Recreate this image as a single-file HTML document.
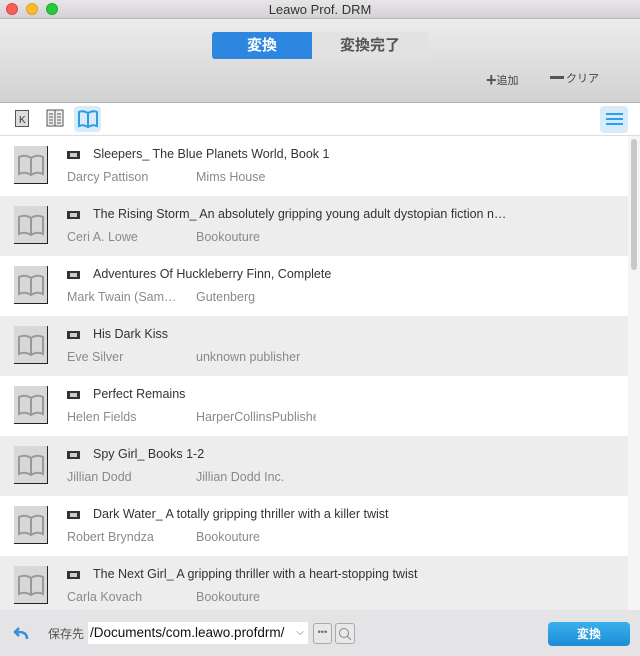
<!DOCTYPE html>
<html><head><meta charset="utf-8"><style>
*{margin:0;padding:0;box-sizing:border-box}
body{width:640px;height:656px;overflow:hidden;font-family:"Liberation Sans","Noto Sans CJK JP",sans-serif;background:#fff;position:relative}
.title{position:absolute;top:0;left:0;width:640px;height:19px;background:linear-gradient(#e8e6e8,#d4d2d4);border-bottom:1px solid #b8b8b8;text-align:center;font-size:13px;line-height:19px;color:#333}
.dot{position:absolute;top:3px;width:12px;height:12px;border-radius:50%}
.tb{position:absolute;top:19px;left:0;width:640px;height:84px;background:linear-gradient(#ececec,#d2d2d2);border-bottom:1px solid #b4b4b4}
.seg{position:absolute;top:13px;left:212px;width:216px;height:27px;background:#e2e2e2;border-radius:3px;font-weight:bold;font-size:15px}
.seg .a{position:absolute;left:0;top:0;width:100px;height:27px;background:#2d87e0;color:#fff;text-align:center;line-height:27px;border-radius:3px 0 0 3px}
.seg .b{position:absolute;left:100px;top:0;width:116px;height:27px;color:#555;text-align:center;line-height:27px}
.act{position:absolute;top:51px;font-size:11px;color:#444}
.ib{position:absolute;top:103px;left:0;width:640px;height:33px;background:#fff;border-bottom:1px solid #ddd}
.row{position:absolute;left:0;width:628px;height:60px}
.row.g{background:#ecedec}
.th{position:absolute;left:14px;top:10px;width:34px;height:38px;background:#d8d8d8;border-right:1px solid #222;border-bottom:1px solid #222}
.th svg{position:absolute;left:3px;top:8px}
.sb{position:absolute;left:67px;top:15px;width:13px;height:8px;background:#333}
.sb:after{content:"";position:absolute;left:3px;top:2px;width:7px;height:4px;background:#ccc}
.t{position:absolute;left:93px;top:11px;font-size:12.5px;color:#333;white-space:nowrap}
.au{position:absolute;left:67px;top:34px;font-size:12.5px;color:#8a8a8a;white-space:nowrap}
.pu{position:absolute;left:196px;top:34px;font-size:12.5px;color:#8a8a8a;white-space:nowrap}
.bot{position:absolute;top:610px;left:0;width:640px;height:46px;background:#e4e4e6}
</style></head><body>
<div class="title">Leawo Prof. DRM
<div class="dot" style="left:6px;background:#fc5f57;border:1px solid #df4744"></div>
<div class="dot" style="left:26px;background:#fdbc2e;border:1px solid #dea123"></div>
<div class="dot" style="left:46px;background:#28c840;border:1px solid #1dad2b"></div>
</div>
<div class="tb">
<div class="seg"><div class="a">変換</div><div class="b">変換完了</div></div>
<div class="act" style="left:486px"><span style="font-size:18px;font-weight:bold;color:#555;vertical-align:-2px">+</span>追加</div>
<div class="act" style="left:550px"><span style="display:inline-block;width:14px;height:3px;background:#555;vertical-align:3px;margin-right:2px"></span>クリア</div>
</div>
<div class="ib">
<svg style="position:absolute;left:15px;top:7px" width="14" height="17"><rect x="0.5" y="0.5" width="13" height="16" fill="#ddd" stroke="#555"/><text x="4" y="13" font-size="10" font-family="Liberation Sans" fill="#333">K</text></svg>
<svg style="position:absolute;left:46px;top:6px" width="18" height="18"><rect x="1" y="1" width="16" height="16" fill="#eee" stroke="#555"/><line x1="9" y1="1" x2="9" y2="17" stroke="#555"/><path d="M3 5h4M3 8h4M3 11h4M3 14h4M11 5h4M11 8h4M11 11h4M11 14h4" stroke="#555"/></svg>
<div style="position:absolute;left:74px;top:3px;width:27px;height:26px;background:#d8ebfa;border-radius:4px"></div>
<svg style="position:absolute;left:78px;top:7px" width="20" height="18"><path d="M10 3Q5 0 1 2V16Q5 14 10 17Q15 14 19 16V2Q15 0 10 3V17" fill="none" stroke="#2d9be8" stroke-width="2"/></svg>
<div style="position:absolute;left:600px;top:3px;width:28px;height:27px;background:#d8ebfa;border-radius:4px"></div>
<div style="position:absolute;left:606px;top:10px;width:17px;height:2px;background:#2aa0ee;box-shadow:0 5px 0 #2aa0ee,0 10px 0 #2aa0ee"></div>
</div>
<div style="position:absolute;left:628px;top:136px;width:12px;height:474px;background:#f5f5f5"></div>
<div style="position:absolute;left:631px;top:139px;width:6px;height:131px;background:#c8c8c8;border-radius:3px"></div>

<div class="row" style="top:136px"><div class="th"><svg width="28" height="22"><path d="M14 4Q8 0 2 3V20Q8 17 14 21Q20 17 26 20V3Q20 0 14 4V21" fill="none" stroke="#999" stroke-width="2"/></svg></div><div class="sb"></div><div class="t">Sleepers_ The Blue Planets World, Book 1</div><div class="au">Darcy Pattison</div><div class="pu">Mims House</div></div>
<div class="row g" style="top:196px"><div class="th"><svg width="28" height="22"><path d="M14 4Q8 0 2 3V20Q8 17 14 21Q20 17 26 20V3Q20 0 14 4V21" fill="none" stroke="#999" stroke-width="2"/></svg></div><div class="sb"></div><div class="t">The Rising Storm_ An absolutely gripping young adult dystopian fiction n…</div><div class="au">Ceri A. Lowe</div><div class="pu">Bookouture</div></div>
<div class="row" style="top:256px"><div class="th"><svg width="28" height="22"><path d="M14 4Q8 0 2 3V20Q8 17 14 21Q20 17 26 20V3Q20 0 14 4V21" fill="none" stroke="#999" stroke-width="2"/></svg></div><div class="sb"></div><div class="t">Adventures Of Huckleberry Finn, Complete</div><div class="au">Mark Twain (Sam…</div><div class="pu">Gutenberg</div></div>
<div class="row g" style="top:316px"><div class="th"><svg width="28" height="22"><path d="M14 4Q8 0 2 3V20Q8 17 14 21Q20 17 26 20V3Q20 0 14 4V21" fill="none" stroke="#999" stroke-width="2"/></svg></div><div class="sb"></div><div class="t">His Dark Kiss</div><div class="au">Eve Silver</div><div class="pu">unknown publisher</div></div>
<div class="row" style="top:376px"><div class="th"><svg width="28" height="22"><path d="M14 4Q8 0 2 3V20Q8 17 14 21Q20 17 26 20V3Q20 0 14 4V21" fill="none" stroke="#999" stroke-width="2"/></svg></div><div class="sb"></div><div class="t">Perfect Remains</div><div class="au">Helen Fields</div><div class="pu" style="width:120px;overflow:hidden">HarperCollinsPublishe</div></div>
<div class="row g" style="top:436px"><div class="th"><svg width="28" height="22"><path d="M14 4Q8 0 2 3V20Q8 17 14 21Q20 17 26 20V3Q20 0 14 4V21" fill="none" stroke="#999" stroke-width="2"/></svg></div><div class="sb"></div><div class="t">Spy Girl_ Books 1-2</div><div class="au">Jillian Dodd</div><div class="pu">Jillian Dodd Inc.</div></div>
<div class="row" style="top:496px"><div class="th"><svg width="28" height="22"><path d="M14 4Q8 0 2 3V20Q8 17 14 21Q20 17 26 20V3Q20 0 14 4V21" fill="none" stroke="#999" stroke-width="2"/></svg></div><div class="sb"></div><div class="t">Dark Water_ A totally gripping thriller with a killer twist</div><div class="au">Robert Bryndza</div><div class="pu">Bookouture</div></div>
<div class="row g" style="top:556px;height:54px;overflow:hidden"><div class="th"><svg width="28" height="22"><path d="M14 4Q8 0 2 3V20Q8 17 14 21Q20 17 26 20V3Q20 0 14 4V21" fill="none" stroke="#999" stroke-width="2"/></svg></div><div class="sb"></div><div class="t">The Next Girl_ A gripping thriller with a heart-stopping twist</div><div class="au">Carla Kovach</div><div class="pu">Bookouture</div></div>

<div class="bot">
<svg style="position:absolute;left:13px;top:17px" width="16" height="13"><path d="M14 12Q14 5 6 5H3M6 1L2 5L6 9" fill="none" stroke="#3a8ed8" stroke-width="2.5"/></svg>
<div style="position:absolute;left:48px;top:15px;font-size:12px;color:#555">保存先</div>
<div style="position:absolute;left:88px;top:12px;width:220px;height:22px;background:#fff;font-size:13.5px;line-height:22px;padding-left:2px;color:#111">/Documents/com.leawo.profdrm/<span style="position:absolute;right:4px;color:#666;font-size:10px">⌵</span></div>
<div style="position:absolute;left:313px;top:13px;width:19px;height:21px;border:1px solid #aaa;border-radius:3px;background:#e8e8e8;font-size:9px;text-align:center;line-height:17px;color:#666">•••</div>
<div style="position:absolute;left:335px;top:13px;width:20px;height:21px;border:1px solid #aaa;border-radius:3px;background:#e8e8e8"></div>
<svg style="position:absolute;left:338px;top:17px" width="14" height="14"><circle cx="6" cy="6" r="4.5" fill="none" stroke="#888"/><path d="M9 9L13 13" stroke="#888"/></svg>
<div style="position:absolute;left:548px;top:12px;width:82px;height:24px;border-radius:4px;background:linear-gradient(#3ab0ec,#1c8cd6);color:#fff;font-size:12px;font-weight:bold;text-align:center;line-height:24px">変換</div>
</div>
</body></html>
